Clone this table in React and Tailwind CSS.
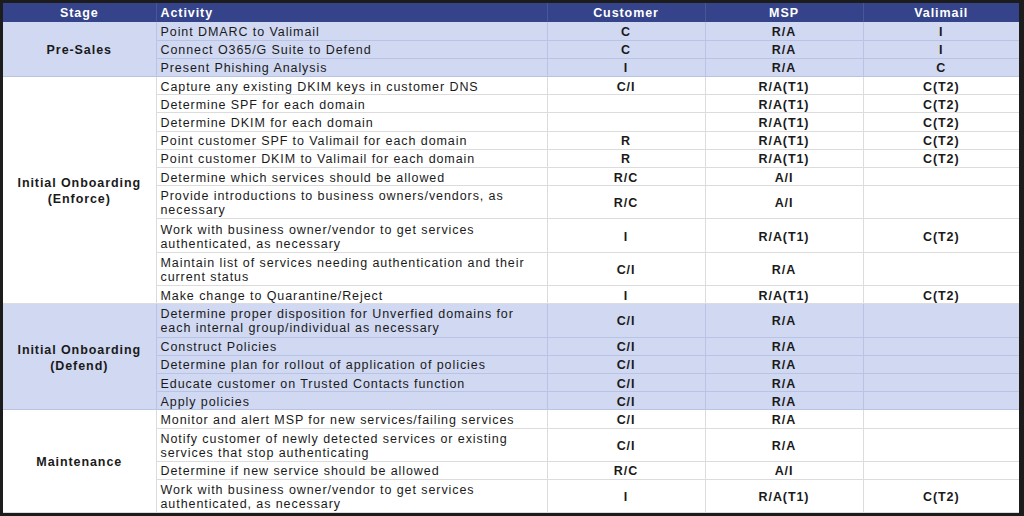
const groups = [
  {
    stage: ["Pre-Sales"],
    blue: true,
    rows: [
      ["Point DMARC to Valimail", "C", "R/A", "I"],
      ["Connect O365/G Suite to Defend", "C", "R/A", "I"],
      ["Present Phishing Analysis", "I", "R/A", "C"],
    ],
  },
  {
    stage: ["Initial Onboarding", "(Enforce)"],
    blue: false,
    rows: [
      ["Capture any existing DKIM keys in customer DNS", "C/I", "R/A(T1)", "C(T2)"],
      ["Determine SPF for each domain", "", "R/A(T1)", "C(T2)"],
      ["Determine DKIM for each domain", "", "R/A(T1)", "C(T2)"],
      ["Point customer SPF to Valimail for each domain", "R", "R/A(T1)", "C(T2)"],
      ["Point customer DKIM to Valimail for each domain", "R", "R/A(T1)", "C(T2)"],
      ["Determine which services should be allowed", "R/C", "A/I", ""],
      ["Provide introductions to business owners/vendors, as necessary", "R/C", "A/I", "", true],
      ["Work with business owner/vendor to get services authenticated, as necessary", "I", "R/A(T1)", "C(T2)", true],
      ["Maintain list of services needing authentication and their current status", "C/I", "R/A", "", true],
      ["Make change to Quarantine/Reject", "I", "R/A(T1)", "C(T2)"],
    ],
  },
  {
    stage: ["Initial Onboarding", "(Defend)"],
    blue: true,
    rows: [
      ["Determine proper disposition for Unverfied domains for each internal group/individual as necessary", "C/I", "R/A", "", true],
      ["Construct Policies", "C/I", "R/A", ""],
      ["Determine plan for rollout of application of policies", "C/I", "R/A", ""],
      ["Educate customer on Trusted Contacts function", "C/I", "R/A", ""],
      ["Apply policies", "C/I", "R/A", ""],
    ],
  },
  {
    stage: ["Maintenance"],
    blue: false,
    rows: [
      ["Monitor and alert MSP for new services/failing services", "C/I", "R/A", ""],
      ["Notify customer of newly detected services or existing services that stop authenticating", "C/I", "R/A", "", true],
      ["Determine if new service should be allowed", "R/C", "A/I", ""],
      ["Work with business owner/vendor to get services authenticated, as necessary", "I", "R/A(T1)", "C(T2)", true],
    ],
  },
];

export default function App() {
  return (
    <div className="w-[1024px] h-[516px] bg-[#1c1c1c] pt-[3px] pl-[3px] pr-[5px] pb-[3px] font-['Liberation_Sans',Arial,sans-serif]">
      <table className="w-full table-fixed border-collapse bg-white text-[12.5px] leading-[14px] tracking-[0.92px] text-[#1a1a1a]">
        <colgroup>
          <col className="w-[153px]" />
          <col className="w-[391px]" />
          <col className="w-[158px]" />
          <col className="w-[158px]" />
          <col className="w-[156px]" />
        </colgroup>
        <thead>
          <tr className="h-[19px] bg-[#35438a] text-white font-bold">
            <th className="p-0 pt-[1px] text-center font-bold">Stage</th>
            <th className="p-0 pt-[1px] pl-[4px] text-left font-bold border-l border-[#4a5796]">Activity</th>
            <th className="p-0 pt-[1px] text-center font-bold border-l border-[#4a5796]">Customer</th>
            <th className="p-0 pt-[1px] text-center font-bold border-l border-[#4a5796]">MSP</th>
            <th className="p-0 pt-[1px] text-center font-bold border-l border-[#4a5796]">Valimail</th>
          </tr>
        </thead>
        <tbody>
          {groups.map((g, gi) =>
            g.rows.map((r, ri) => {
              const line = g.blue ? "border-[#b9c3e3]" : "border-[#dcdcdc]";
              return (
                <tr
                  key={gi + "-" + ri}
                  className={(r[4] ? "h-[33.3px] " : "h-[18.2px] ") + (g.blue ? "bg-[#d0d8f2]" : "bg-white")}
                >
                  {ri === 0 && (
                    <td
                      rowSpan={g.rows.length}
                      className={"p-0 pt-[2px] text-center align-middle font-bold border-b " + line}
                    >
                      {g.stage.map((s) => (
                        <div key={s} className="leading-[16px]">{s}</div>
                      ))}
                    </td>
                  )}
                  <td className={"p-0 pt-[2px] pl-[4px] pr-[6px] align-middle border-l border-b " + line}>{r[0]}</td>
                  <td className={"p-0 pt-[2px] text-center align-middle font-bold border-l border-b " + line}>{r[1]}</td>
                  <td className={"p-0 pt-[2px] text-center align-middle font-bold border-l border-b " + line}>{r[2]}</td>
                  <td className={"p-0 pt-[2px] text-center align-middle font-bold border-l border-b " + line}>{r[3]}</td>
                </tr>
              );
            })
          )}
        </tbody>
      </table>
    </div>
  );
}
